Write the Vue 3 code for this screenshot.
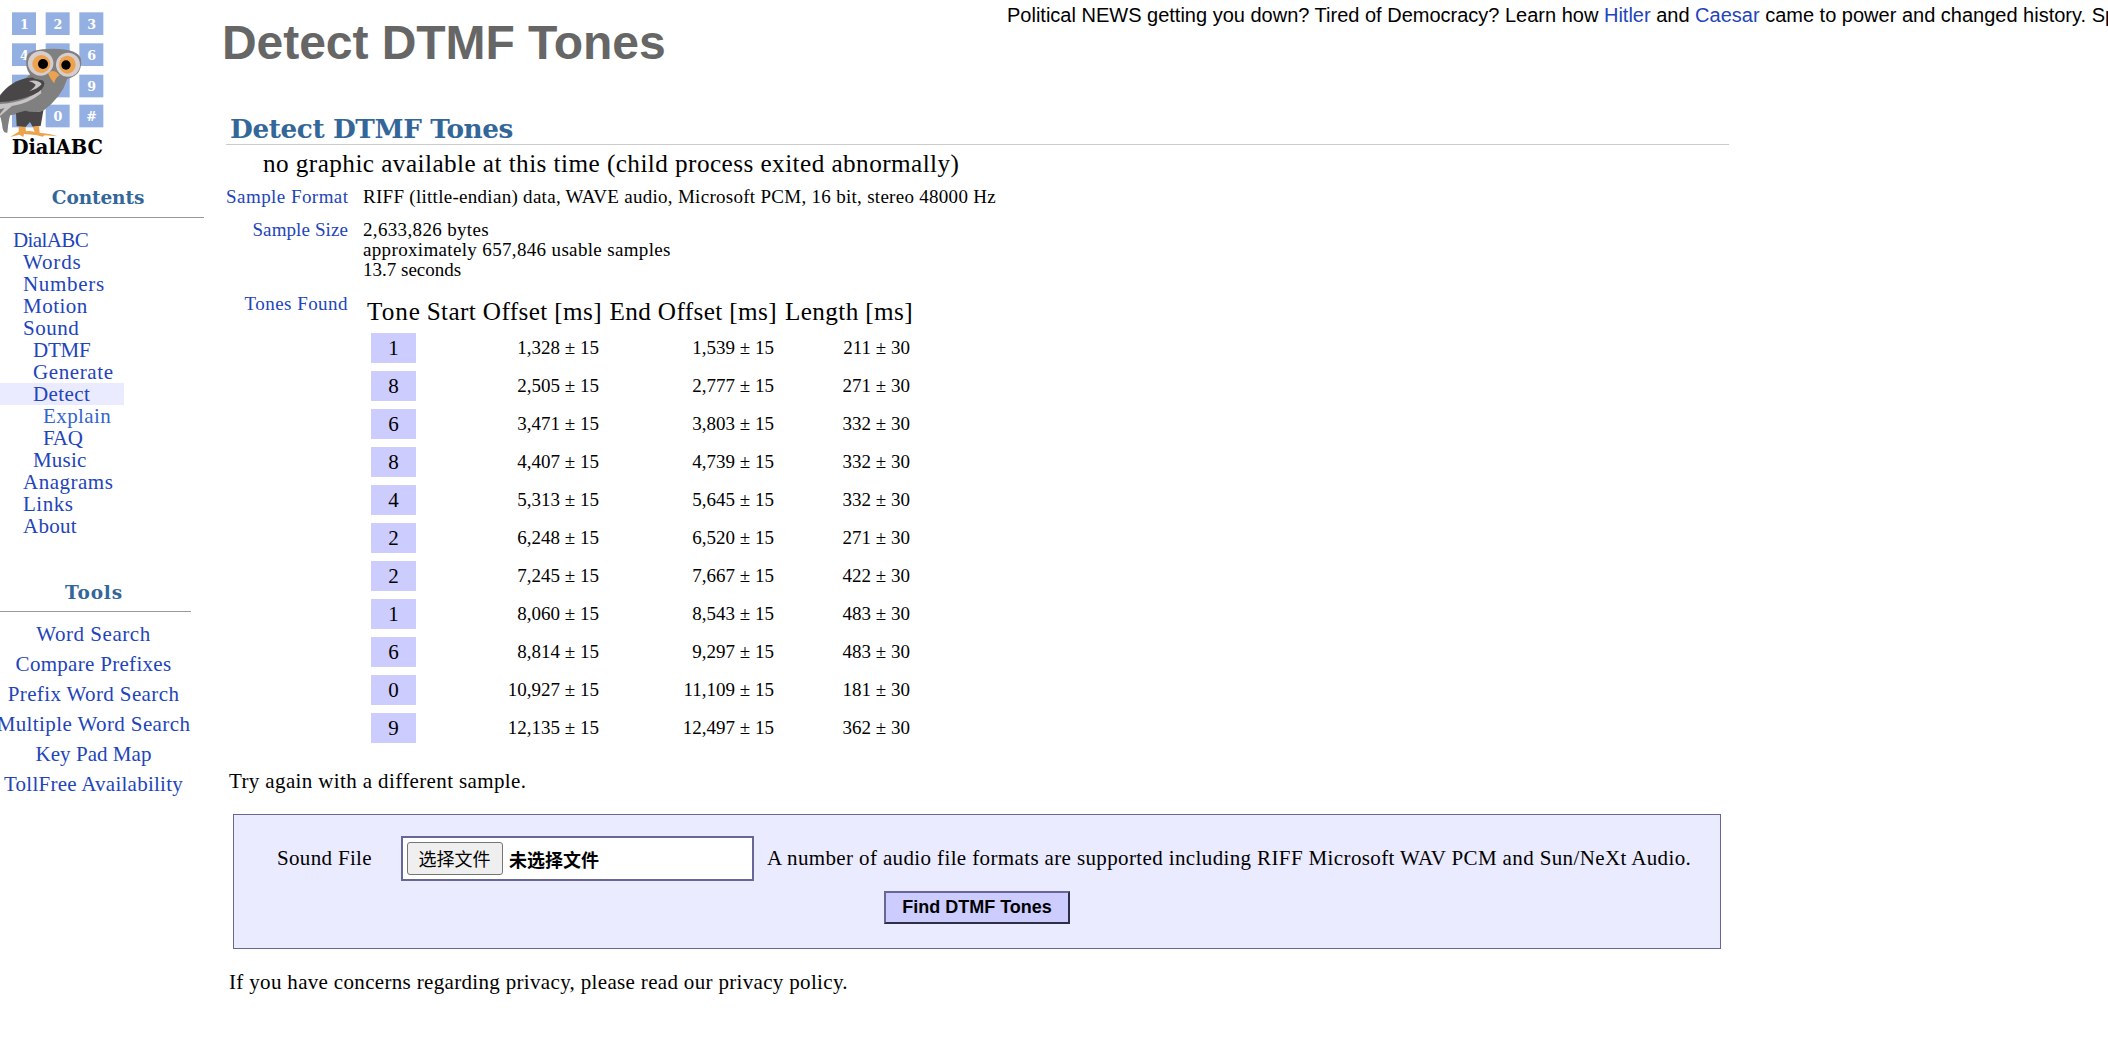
<script setup>
const nav = [
  { t: 'DialABC', d: 0, ls: -0.6 },
  { t: 'Words', d: 1, ls: 0.85 },
  { t: 'Numbers', d: 1, ls: 0.7 },
  { t: 'Motion', d: 1, ls: 0.5 },
  { t: 'Sound', d: 1, ls: 0.5 },
  { t: 'DTMF', d: 2, ls: -0.2 },
  { t: 'Generate', d: 2, ls: 0.6 },
  { t: 'Detect', d: 2, ls: 0.4, on: true },
  { t: 'Explain', d: 3, ls: 0.4, light: true },
  { t: 'FAQ', d: 3, ls: -0.3 },
  { t: 'Music', d: 2, ls: 0.2 },
  { t: 'Anagrams', d: 1, ls: 0.5 },
  { t: 'Links', d: 1, ls: 0.5 },
  { t: 'About', d: 1, ls: 0.3 },
]
const tools = [
  { t: 'Word Search', ls: 0.55 },
  { t: 'Compare Prefixes', ls: 0.3 },
  { t: 'Prefix Word Search', ls: 0.38 },
  { t: 'Multiple Word Search', ls: 0.4 },
  { t: 'Key Pad Map', ls: 0.05 },
  { t: 'TollFree Availability', ls: 0.26 },
]
const tones = [
  ['1', '1,328', '1,539', '211'],
  ['8', '2,505', '2,777', '271'],
  ['6', '3,471', '3,803', '332'],
  ['8', '4,407', '4,739', '332'],
  ['4', '5,313', '5,645', '332'],
  ['2', '6,248', '6,520', '271'],
  ['2', '7,245', '7,667', '422'],
  ['1', '8,060', '8,543', '483'],
  ['6', '8,814', '9,297', '483'],
  ['0', '10,927', '11,109', '181'],
  ['9', '12,135', '12,497', '362'],
]
const keys = [
  [36, 37, '1'], [137, 37, '2'], [238, 37, '3'],
  [36, 130, '4'], [137, 130, ''], [238, 130, '6'],
  [36, 224, ''], [137, 224, ''], [238, 224, '9'],
  [36, 314, ''], [137, 314, '0'], [238, 314, '#'],
]
</script>

<template>
  <div class="page">
    <aside class="side">
      <svg class="logo" viewBox="0 0 318 471" width="106" height="157">
        <g v-for="(k, i) in keys" :key="i">
          <rect :x="k[0]" :y="k[1]" width="72" height="68" fill="#94afe2" />
          <text :x="k[0] + 37" :y="k[1] + 50" class="key">{{ k[2] }}</text>
        </g>
        <!-- tail and body -->
        <path d="M0 345 L38 322 Q26 350 22 398 Q8 402 6 372 Z" fill="#808080" />
        <path d="M92 222 Q122 206 150 232 L202 236 Q186 290 128 334 L52 342 L0 352 L0 296 Z" fill="#808080" />
        <path d="M0 312 Q80 308 122 268 L124 280 Q84 312 36 318 L0 348 Z" fill="#c9c4c4" />
        <path d="M0 328 L14 324 L0 342 Z" fill="#777" />
        <!-- wing -->
        <path d="M0 286 Q34 240 88 233 Q128 228 133 250 Q134 270 100 284 Q50 304 0 306 Z" fill="#484646" />
        <path d="M86 243 Q116 238 125 253 Q114 266 88 274 Q104 262 107 254 Q100 246 86 243 Z" fill="#c9c4c4" />
        <!-- legs -->
        <path d="M48 340 L76 332 Q100 340 130 332 L122 378 L98 380 L90 366 L76 382 L50 378 Z" fill="#484646" />
        <path d="M56 380 L76 380 L78 394 Q90 392 104 396 L98 380 L117 377 L119 398 Q150 400 174 409 L134 406 L128 410 L108 405 L72 402 L70 411 L58 404 L30 411 L56 395 Z" fill="#eda24d" />
        <!-- head -->
        <path d="M80 170 Q86 146 160 146 Q236 146 243 178 Q248 226 204 236 L150 246 L104 236 Q72 214 80 170 Z" fill="#808080" />
        <ellipse cx="122" cy="190" rx="38" ry="37" fill="#d6cece" />
        <ellipse cx="204" cy="194" rx="36" ry="36" fill="#d6cece" />
        <ellipse cx="124" cy="192" rx="27" ry="27" fill="#eda24d" />
        <ellipse cx="202" cy="194" rx="25" ry="27" fill="#eda24d" />
        <circle cx="129" cy="192" r="15" fill="#000" />
        <circle cx="198" cy="195" r="14" fill="#000" />
        <path d="M144 220 Q160 204 179 226 Q166 232 163 250 Q154 242 144 220 Z" fill="#eda24d" />
        <text x="35" y="462" class="brand" textLength="274" lengthAdjust="spacingAndGlyphs">DialABC</text>
      </svg>

      <h3 class="side-title">Contents</h3>
      <nav class="nav">
        <a v-for="n in nav" :key="n.t" :class="['l' + n.d, { on: n.on, light: n.light }]"
          :style="{ letterSpacing: n.ls + 'px' }">{{ n.t }}</a>
      </nav>

      <section class="tools">
        <h3 class="side-title tools-title">Tools</h3>
        <a v-for="t in tools" :key="t.t" :style="{ letterSpacing: t.ls + 'px' }">{{ t.t }}</a>
      </section>
    </aside>

    <main class="main">
      <header class="top">
        <h1>Detect DTMF Tones</h1>
        <p class="ticker">Political NEWS getting you down? Tired of Democracy? Learn how <a>Hitler</a> and <a>Caesar</a> came to power and changed history. Sp</p>
      </header>

      <h2>Detect DTMF Tones</h2>
      <p class="nographic">no graphic available at this time (child process exited abnormally)</p>

      <dl class="info">
        <dt class="sf">Sample Format</dt>
        <dd class="fmt">RIFF (little-endian) data, WAVE audio, Microsoft PCM, 16 bit, stereo 48000 Hz</dd>
        <dt class="ss">Sample Size</dt>
        <dd class="sizes">2,633,826 bytes<br />approximately 657,846 usable samples<br /><span class="sec">13.7 seconds</span></dd>
        <dt class="tf">Tones Found</dt>
        <dd>
          <div class="tones">
            <div class="row head"><span class="tone-h">Tone</span><span>Start Offset [ms]</span><span>End Offset [ms]</span><span>Length [ms]</span></div>
            <div v-for="r in tones" :key="r[1]" class="row">
              <b class="chip">{{ r[0] }}</b>
              <span>{{ r[1] }} ± 15</span>
              <span>{{ r[2] }} ± 15</span>
              <span>{{ r[3] }} ± 30</span>
            </div>
          </div>
        </dd>
      </dl>

      <p class="para again">Try again with a different sample.</p>

      <form class="box" @submit.prevent>
        <div class="line">
          <label class="para">Sound File</label>
          <div class="file">
            <button type="button" class="pick">选择文件</button>
            <span class="none">未选择文件</span>
          </div>
          <span class="para hint">A number of audio file formats are supported including RIFF Microsoft WAV PCM and Sun/NeXt Audio.</span>
        </div>
        <button class="submit">Find DTMF Tones</button>
      </form>

      <p class="para privacy">If you have concerns regarding privacy, please read our privacy policy.</p>
    </main>
  </div>
</template>

<style>
body { margin: 0; background: #fff; overflow: hidden; }
</style>

<style scoped>
.page {
  display: flex;
  width: 2108px;
  height: 1043px;
  overflow: hidden;
  font-family: "Liberation Serif", "Noto Sans CJK SC", serif;
  color: #000;
}
h1, h2, h3, p, dl, dd { margin: 0; }
a { color: #2244bb; white-space: nowrap; }

.side { width: 204px; flex: none; }
.logo { display: block; }
.key { font: bold 38px "DejaVu Serif", serif; fill: #fff; text-anchor: middle; }
.brand { font: bold 60px "DejaVu Serif", serif; fill: #000; }
.side-title {
  box-sizing: border-box;
  height: 31px;
  margin-top: 30px;
  padding-right: 8px;
  border-bottom: 1px solid #999;
  text-align: center;
  font: bold 18.5px/21px "DejaVu Serif", serif;
  letter-spacing: -0.1px;
  color: #336699;
}
.nav { display: flex; flex-direction: column; padding-top: 11px; }
.nav a {
  box-sizing: border-box;
  width: 124px;
  height: 22px;
  font-size: 21px;
  line-height: 22px;
}
.l0 { padding-left: 13px; }
.l1 { padding-left: 23px; }
.l2 { padding-left: 33px; }
.l3 { padding-left: 43px; }
.on { background: #ebebff; }
.light { color: #3366cc; }

.tools {
  display: flex;
  flex-direction: column;
  align-items: center;
  width: 191px;
  margin-top: 45px;
}
.tools-title {
  align-self: stretch;
  height: 30px;
  margin: 0 0 7px;
  padding: 0 3px 0 0;
  letter-spacing: 0.8px;
}
.tools a { height: 30px; font-size: 21px; line-height: 30px; margin-left: -4px; }

.main { flex: 1; min-width: 0; padding-left: 22px; }
.top { display: flex; height: 114px; }
h1 {
  width: 782px;
  margin: 16px 0 0 -4px;
  font: bold 48px/54px "Liberation Sans", sans-serif;
  letter-spacing: -0.05px;
  color: #666;
  white-space: nowrap;
}
.ticker {
  flex: 1;
  min-width: 0;
  margin-left: 3px;
  margin-top: 3px;
  overflow: hidden;
  white-space: nowrap;
  font: 20px/24px "Liberation Sans", sans-serif;
}
h2 {
  width: 1499px;
  padding: 1px 0 1px 4px;
  border-bottom: 1px solid #ccc;
  font: bold 26.3px/28px "DejaVu Serif", serif;
  letter-spacing: -0.4px;
  color: #336699;
}
.nographic { margin: 4px 0 0 37px; font-size: 25.2px; line-height: 30px; letter-spacing: 0.446px; }

.info {
  display: grid;
  grid-template-columns: 122px 1fr;
  column-gap: 15px;
  margin-top: 8px;
  font-size: 19px;
  line-height: 20px;
}
dt { text-align: right; color: #2244bb; white-space: nowrap; padding-bottom: 13px; }
.sf { letter-spacing: 0.45px; }
.ss { letter-spacing: 0.1px; }
.tf { letter-spacing: 0.46px; padding-top: 1px; }
.fmt { letter-spacing: 0.286px; }
.sizes { letter-spacing: 0.343px; padding-bottom: 13px; }
.sec { letter-spacing: 0; }

.tones { display: flex; flex-direction: column; gap: 8px; padding: 5px 0 0 4px; }
.row {
  display: grid;
  grid-template-columns: 55px 180px 175px 136px;
  height: 30px;
  text-align: right;
}
.row span { padding: 5px 3px 0 0; }
.row.head { height: 27px; font-size: 25.2px; line-height: 28px; letter-spacing: 0.38px; }
.row.head span { padding: 0; }
.row.head .tone-h { letter-spacing: 1px; text-align: left; }
.chip {
  width: 45px;
  height: 30px;
  margin-left: 4px;
  background: #ccccff;
  text-align: center;
  font-weight: normal;
  font-size: 21px;
  line-height: 30px;
}

.para { font-size: 21px; line-height: 24px; letter-spacing: 0.33px; white-space: nowrap; }
.again { margin: 26px 0 21px 3px; letter-spacing: 0.376px; }
.box {
  display: flex;
  flex-direction: column;
  align-items: center;
  box-sizing: border-box;
  width: 1488px;
  height: 135px;
  margin-left: 7px;
  padding-top: 21px;
  border: 1px solid #666699;
  background: #ebebff;
}
.line { display: flex; align-items: center; align-self: stretch; padding-left: 43px; }
.line label { width: 124px; padding-bottom: 2px; }
.file {
  display: flex;
  align-items: center;
  box-sizing: border-box;
  width: 353px;
  height: 45px;
  padding-left: 4px;
  border: 2px solid #666699;
  background: #fff;
  font-family: "Liberation Sans", "Noto Sans CJK SC", sans-serif;
}
.pick {
  box-sizing: border-box;
  width: 96px;
  height: 33px;
  padding: 0 1px 2px 0;
  border: 1px solid #767676;
  border-radius: 3px;
  background: #efefef;
  color: #000;
  font: 18px/28px "Noto Sans CJK SC", sans-serif;
}
.none { margin-left: 6px; font: bold 18px/26px "Noto Sans CJK SC", sans-serif; }
.hint { margin-left: 13px; padding-bottom: 2px; letter-spacing: 0.375px; }
.submit {
  box-sizing: border-box;
  width: 186px;
  height: 33px;
  margin-top: 10px;
  padding: 0 0 1px;
  border: 2px solid;
  border-color: #666699 #2e2e45 #2e2e45 #666699;
  border-radius: 0;
  background: #ccccff;
  color: #000;
  font: bold 18px/28px "Liberation Sans", sans-serif;
}
.privacy { margin: 21px 0 0 3px; }
</style>
